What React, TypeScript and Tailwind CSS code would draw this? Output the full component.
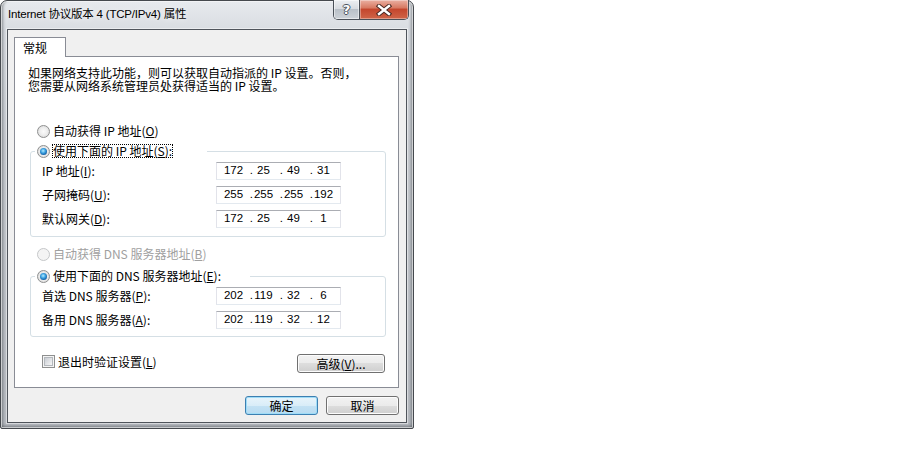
import React from 'react';

const Radio: React.FC<{ checked?: boolean; disabled?: boolean }> = ({ checked = false, disabled = false }) => (
  <span
    className={
      disabled
        ? 'w-[13px] h-[13px] shrink-0 rounded-full border border-[#c5c7c9] bg-[#f4f4f4] flex items-center justify-center'
        : 'w-[13px] h-[13px] shrink-0 rounded-full border border-[#8e8f8f] bg-[radial-gradient(circle_at_50%_50%,#fbfbfb_0%,#eeeeee_45%,#d2d2d2_100%)] flex items-center justify-center'
    }
  >
    {checked && (
      <span className="w-[7px] h-[7px] rounded-full bg-[radial-gradient(circle_at_45%_40%,#b4ecff_0%,#3aa0e0_40%,#105aa0_75%,#0b3d78_100%)]" />
    )}
  </span>
);

const IpBox: React.FC<{ parts: string[] }> = ({ parts }) => (
  <div className="w-[125px] h-[18px] shrink-0 bg-white border border-t-[#abadb3] border-x-[#e2e3ea] border-b-[#e3e9ef] flex items-center pl-[6px] font-['Liberation_Sans',sans-serif] text-[11.5px] leading-none text-black">
    {parts.map((p, i) => (
      <React.Fragment key={i}>
        <span className="w-[21px] text-center">{p}</span>
        {i < 3 && <span className="w-[9px] text-right">.</span>}
      </React.Fragment>
    ))}
  </div>
);

const Row: React.FC<{ label: React.ReactNode; parts: string[]; first?: boolean }> = ({ label, parts, first }) => (
  <div className={first ? 'mt-[4px] flex items-center h-[18px] pl-[11px]' : 'mt-[6px] flex items-center h-[18px] pl-[11px]'}>
    <span className="w-[174px] leading-none">{label}</span>
    <IpBox parts={parts} />
  </div>
);

const btn =
  'h-[19px] rounded-[3px] border border-[#707070] bg-[linear-gradient(180deg,#f2f2f2_0%,#ebebeb_50%,#dddddd_50%,#cfcfcf_100%)] shadow-[inset_0_0_0_1px_#fcfcfc] flex items-center justify-center text-[12px] leading-none text-black';

export default function App() {
  return (
    <div className="w-[906px] h-[460px] bg-white font-['Noto_Sans_CJK_SC',sans-serif] text-[12px] text-black">
      {/* window frame */}
      <div className="w-[414px] h-[429px] flex flex-col px-[6px] pb-[5px] rounded-t-[7px] rounded-b-[2px] border border-[#45494e] bg-[linear-gradient(180deg,#e7eaee_0px,#d8dce1_30px,#c9cdd2_140px,#b6bac0_429px)] shadow-[inset_0_0_0_1px_rgba(255,255,255,0.6),inset_4px_0_3px_-2px_rgba(70,74,80,0.55),inset_-4px_0_3px_-2px_rgba(70,74,80,0.55),inset_0_-4px_3px_-2px_rgba(70,74,80,0.55)]">
        {/* title bar */}
        <div className="h-[28px] flex items-start -mx-[6px]">
          <span className="ml-[7px] mt-[6px] leading-[15px] text-[11.5px] tracking-[-0.2px] font-['Liberation_Sans','Noto_Sans_CJK_SC',sans-serif] text-black [text-shadow:0_0_6px_rgba(255,255,255,0.9)]">
            Internet 协议版本 4 (TCP/IPv4) 属性
          </span>
          <div className="ml-auto mr-[4px] -mt-px h-[20px] flex border border-t-0 border-[#4a5058] rounded-b-[5px] overflow-hidden">
            <div className="w-[26px] h-full flex items-center justify-center border-r border-[#4a5058] bg-[linear-gradient(180deg,#eceff2_0%,#d8dce1_45%,#b9c0c8_50%,#cdd2d8_100%)] shadow-[inset_0_0_0_1px_rgba(255,255,255,0.5)]">
              <span className="font-['DejaVu_Sans',sans-serif] font-bold text-[13px] leading-none text-white [text-shadow:1px_0_0_#4a525c,-1px_0_0_#4a525c,0_1px_0_#4a525c,0_-1px_0_#4a525c]">
                ?
              </span>
            </div>
            <div className="w-[48px] h-full flex items-center justify-center bg-[linear-gradient(180deg,#eab0a2_0%,#d87b64_40%,#c4472e_50%,#cf6548_100%)] shadow-[inset_0_0_0_1px_rgba(255,255,255,0.35)]">
              <svg width="16" height="12" viewBox="0 0 16 12">
                <path d="M3 2 L13 10 M13 2 L3 10" stroke="#4a2a24" strokeWidth="4.4" strokeLinecap="square" />
                <path d="M3 2 L13 10 M13 2 L3 10" stroke="#ffffff" strokeWidth="2.4" strokeLinecap="square" />
              </svg>
            </div>
          </div>
        </div>

        {/* client area */}
        <div className="w-[400px] h-[394px] flex flex-col border border-[#4f545b] bg-[#f0f0f0] shadow-[0_0_0_1px_rgba(255,255,255,0.45)]">
          {/* tab */}
          <div className="ml-[6px] mt-[7px] w-[52px] h-[20px] -mb-px relative z-10 bg-white border border-b-0 border-[#898c95] pl-[8px] flex items-center leading-none">
            常规
          </div>

          {/* tab page */}
          <div className="ml-[6px] w-[385px] h-[332px] bg-white border border-[#898c95] flex flex-col">
            <p className="mt-[9px] ml-[13px] leading-[13px]">
              如果网络支持此功能，则可以获取自动指派的 IP 设置。否则，
              <br />
              您需要从网络系统管理员处获得适当的 IP 设置。
            </p>

            <div className="mt-[32px] ml-[22px] h-[14px] flex items-center leading-none">
              <Radio />
              <span className="ml-[3px]">
                自动获得 IP 地址(<u>O</u>)
              </span>
            </div>

            {/* IP group */}
            <div className="mt-[13px] ml-[15px] w-[356px] h-[86px] border border-[#d5dfe5] rounded-[3px] flex flex-col">
              <div className="-mt-[8px] ml-[4px] w-[172px] h-[14px] bg-white flex items-center leading-none">
                <span className="ml-[2px]">
                  <Radio checked />
                </span>
                <span className="ml-[2px] border border-dotted border-black h-[14px] flex items-center">
                  使用下面的 IP 地址(<u>S</u>):
                </span>
              </div>
              <Row first label={<>IP 地址(<u>I</u>):</>} parts={['172', '25', '49', '31']} />
              <Row label={<>子网掩码(<u>U</u>):</>} parts={['255', '255', '255', '192']} />
              <Row label={<>默认网关(<u>D</u>):</>} parts={['172', '25', '49', '1']} />
            </div>

            <div className="mt-[10px] ml-[22px] h-[14px] flex items-center leading-none text-[#a0a0a0]">
              <Radio disabled />
              <span className="ml-[3px]">
                自动获得 DNS 服务器地址(<u>B</u>)
              </span>
            </div>

            {/* DNS group */}
            <div className="mt-[15px] ml-[15px] w-[356px] h-[61px] border border-[#d5dfe5] rounded-[3px] flex flex-col">
              <div className="-mt-[8px] ml-[4px] w-[215px] h-[14px] bg-white flex items-center leading-none">
                <span className="ml-[2px]">
                  <Radio checked />
                </span>
                <span className="ml-[3px]">
                  使用下面的 DNS 服务器地址(<u>E</u>):
                </span>
              </div>
              <Row first label={<>首选 DNS 服务器(<u>P</u>):</>} parts={['202', '119', '32', '6']} />
              <Row label={<>备用 DNS 服务器(<u>A</u>):</>} parts={['202', '119', '32', '12']} />
            </div>

            <div className="mt-[17px] h-[19px] flex items-start">
              <div className="ml-[27px] mt-[1px] flex items-center leading-none">
                <span className="w-[13px] h-[13px] border border-[#8e8f8f] bg-[#f4f4f4] flex items-center justify-center">
                  <span className="w-[9px] h-[9px] border border-[#b4b8bd] bg-[linear-gradient(135deg,#c9cdd3,#f6f6f6)]" />
                </span>
                <span className="ml-[3px]">
                  退出时验证设置(<u>L</u>)
                </span>
              </div>
              <button className={`${btn} ml-auto mr-[13px] w-[88px]`}>
                高级(<u>V</u>)...
              </button>
            </div>
          </div>

          {/* dialog buttons */}
          <div className="mt-[8px] mr-[7px] flex justify-end gap-[8px]">
            <button className="w-[73px] h-[19px] rounded-[3px] border border-[#3c7fb1] bg-[linear-gradient(180deg,#e8f4fb_0%,#d9edf8_50%,#c4e2f4_50%,#b8dbf1_100%)] shadow-[inset_0_0_0_1px_#9fdcf7] flex items-center justify-center text-[12px] leading-none text-black">
              确定
            </button>
            <button className={`${btn} w-[73px]`}>取消</button>
          </div>
        </div>
      </div>
    </div>
  );
}
